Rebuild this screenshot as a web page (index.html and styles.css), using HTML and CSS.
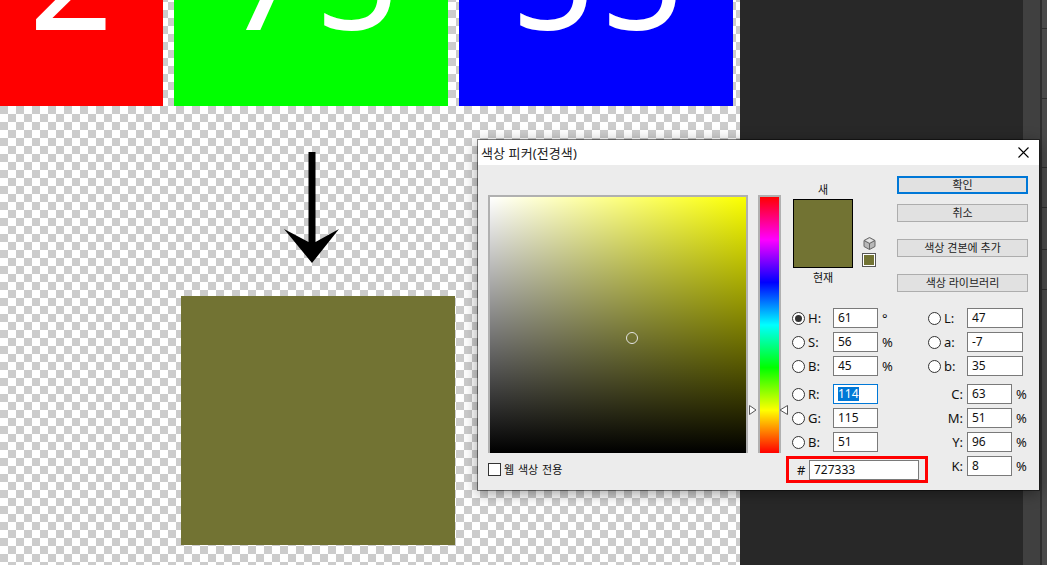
FILE: index.html
```html
<!DOCTYPE html>
<html lang="ko">
<head>
    <meta charset="UTF-8">
    <title>색상 피커</title>
    <link rel="stylesheet" href="styles.css">
</head>
<body>
    <div class="canvas">
        <div class="swatch-row">
            <div class="swatch red"><span class="digits">2</span></div>
            <div class="swatch green"><span class="digits">75</span></div>
            <div class="swatch blue"><span class="digits">55</span></div>
        </div>
        <svg class="arrow" width="56" height="111" viewBox="0 0 56 111">
            <polygon points="24.5,0 31.5,0 31.5,90 55,77 28,111 0,77 24.5,90" fill="#000"/>
        </svg>
        <div class="result"></div>
    </div>
    <div class="workspace"></div>
    <div class="dock"></div>
    <div class="rail">
        <div class="rail-panel p1"></div>
        <div class="rail-panel p2"></div>
        <div class="rail-panel p3"></div>
        <div class="rail-panel p4"></div>
        <div class="rail-panel p5"></div>
        <div class="rail-panel p6"></div>
    </div>

    <div class="dialog">
        <div class="title-bar">
            <span>색상 피커(전경색)</span>
            <svg width="11" height="11" viewBox="0 0 11 11">
                <path d="M0.5 0.5L10.5 10.5M10.5 0.5L0.5 10.5" stroke="#000" stroke-width="1.1" fill="none"/>
            </svg>
        </div>
        <div class="dialog-body">
            <div class="pickers">
                <div class="picker-top">
                    <div class="color-field"><div class="marker"></div></div>
                    <div class="hue-slider">
                        <svg class="hue-arrow left" width="8" height="10" viewBox="0 0 8 10">
                            <path d="M0.5 0.5L7 5L0.5 9.5Z" fill="#fff" stroke="#555"/>
                        </svg>
                        <svg class="hue-arrow right" width="9" height="10" viewBox="0 0 9 10">
                            <path d="M8.5 0.5L1 5L8.5 9.5Z" fill="#fff" stroke="#555"/>
                        </svg>
                    </div>
                </div>
                <div class="web-only">
                    <span class="checkbox"></span>
                    <span>웹 색상 전용</span>
                </div>
            </div>

            <div class="panel">
                <div class="panel-top">
                    <div class="preview">
                        <div class="preview-label">새</div>
                        <div class="preview-row">
                            <div class="preview-swatch"></div>
                            <div class="gamut">
                                <svg width="13" height="13" viewBox="0 0 13 13">
                                    <path d="M6.5 0.5L12 3.5V9.5L6.5 12.5L1 9.5V3.5Z" fill="#b8b8b8" stroke="#666"/>
                                    <path d="M1 3.5L6.5 6.5L12 3.5M6.5 6.5V12.5" fill="none" stroke="#666"/>
                                    <path d="M6.5 1.5L10.5 3.6L6.5 5.6L2.5 3.6Z" fill="#e4e4e4"/>
                                </svg>
                                <div class="web-swatch"></div>
                            </div>
                        </div>
                        <div class="preview-label current">현재</div>
                    </div>
                    <div class="buttons">
                        <div class="button-pair">
                            <div class="btn primary">확인</div>
                            <div class="btn">취소</div>
                        </div>
                        <div class="btn">색상 견본에 추가</div>
                        <div class="btn">색상 라이브러리</div>
                    </div>
                </div>

                <div class="values">
                    <div class="value-col left-col">
                        <div class="value-group">
                            <div class="row"><span class="radio on"></span><span class="name">H:</span><span class="field">61</span><span class="unit">°</span></div>
                            <div class="row"><span class="radio"></span><span class="name">S:</span><span class="field">56</span><span class="unit">%</span></div>
                            <div class="row"><span class="radio"></span><span class="name">B:</span><span class="field">45</span><span class="unit">%</span></div>
                        </div>
                        <div class="value-group">
                            <div class="row"><span class="radio"></span><span class="name">R:</span><span class="field focus"><span class="selected">114</span></span></div>
                            <div class="row"><span class="radio"></span><span class="name">G:</span><span class="field">115</span></div>
                            <div class="row"><span class="radio"></span><span class="name">B:</span><span class="field">51</span></div>
                        </div>
                        <div class="hex-box">
                            <span class="hash">#</span><span class="field hex">727333</span>
                        </div>
                    </div>
                    <div class="value-col right-col">
                        <div class="value-group">
                            <div class="row"><span class="radio"></span><span class="name">L:</span><span class="field wide">47</span></div>
                            <div class="row"><span class="radio"></span><span class="name">a:</span><span class="field wide">-7</span></div>
                            <div class="row"><span class="radio"></span><span class="name">b:</span><span class="field wide">35</span></div>
                        </div>
                        <div class="value-group">
                            <div class="row"><span class="name cmyk">C:</span><span class="field">63</span><span class="unit">%</span></div>
                            <div class="row"><span class="name cmyk">M:</span><span class="field">51</span><span class="unit">%</span></div>
                            <div class="row"><span class="name cmyk">Y:</span><span class="field">96</span><span class="unit">%</span></div>
                            <div class="row"><span class="name cmyk">K:</span><span class="field">8</span><span class="unit">%</span></div>
                        </div>
                    </div>
                </div>
            </div>
        </div>
    </div>
</body>
</html>
```
FILE: styles.css
```css
* {
    box-sizing: border-box;
}

html, body {
    margin: 0;
    height: 565px;
    overflow: hidden;
}

body {
    display: flex;
    position: relative;
    background: #282828;
    font-family: "Noto Sans", "Noto Sans CJK KR", sans-serif;
    font-size: 13px;
    color: #111;
}

/* document area */
.canvas {
    width: 740px;
    height: 565px;
    overflow: hidden;
    background: repeating-conic-gradient(#ccc 0 25%, #fff 0 50%) 0 2px / 16px 16px;
}

.swatch-row {
    display: flex;
    gap: 11px;
    height: 106px;
}

.swatch {
    width: 274px;
    overflow: hidden;
    padding-left: 8px;
    text-align: center;
    color: #fff;
}

.swatch.red {
    width: 163px;
    padding-left: 29px;
    text-align: left;
    background: #f00;
}

.swatch.green {
    background: #0f0;
}

.swatch.blue {
    background: #00f;
}

.digits {
    display: block;
    margin-top: -100px;
    font-size: 147px;
    letter-spacing: 5px;
    line-height: 1;
}

.arrow {
    display: block;
    margin: 46px 0 0 284px;
}

.result {
    width: 274px;
    height: 249px;
    margin: 33px 0 0 181px;
    background: #727333;
}

/* right side of the app */
.workspace {
    flex: 1;
}

.dock {
    width: 17px;
    background: #404040;
}

.rail {
    width: 7px;
    border-left: 2px solid #2e2e2e;
    background: #4a4a4a;
}

.rail-panel {
    border-bottom: 1px solid #2e2e2e;
}

.p1 { height: 29px; }
.p2 { height: 70px; }
.p3 { height: 69px; }
.p4 { height: 40px; }
.p5 { height: 42px; }
.p6 { height: 40px; }

/* color picker window */
.dialog {
    position: absolute;
    left: 478px;
    top: 140px;
    width: 561px;
    height: 350px;
    background: #ececec;
    box-shadow: 0 0 0 1px rgba(0, 0, 0, 0.45), 0 3px 14px rgba(0, 0, 0, 0.4);
}

.title-bar {
    display: flex;
    justify-content: space-between;
    align-items: center;
    height: 25px;
    padding: 0 10px 0 3px;
    background: #fff;
    letter-spacing: 0.1px;
    color: #222;
}

.dialog-body {
    display: flex;
    padding: 11px 11px 0 10px;
}

.pickers {
    margin-top: 19px;
}

.picker-top {
    display: flex;
}

.color-field {
    position: relative;
    width: 260px;
    height: 258px;
    border: 2px solid #b0b0b0;
    border-bottom: 0;
    background:
        linear-gradient(to top, #000, rgba(0, 0, 0, 0)),
        linear-gradient(to right, #fff, #fbff00);
}

.marker {
    position: absolute;
    left: 136px;
    top: 135px;
    width: 12px;
    height: 12px;
    border: 1px solid #e4e4e4;
    border-radius: 50%;
}

.hue-slider {
    position: relative;
    width: 23px;
    height: 258px;
    margin-left: 10px;
    border: 2px solid #b0b0b0;
    border-bottom: 0;
    background: linear-gradient(to bottom, #f00, #f0f 16.67%, #00f 33.33%, #0ff 50%, #0f0 66.67%, #ff0 83.33%, #f00);
}

.hue-arrow {
    position: absolute;
    top: 208px;
}

.hue-arrow.left {
    left: -11px;
}

.hue-arrow.right {
    left: 19px;
}

.web-only {
    display: flex;
    align-items: center;
    gap: 3px;
    margin-top: 10px;
    font-size: 11px;
    line-height: 13px;
    word-spacing: 1px;
}

.checkbox {
    width: 13px;
    height: 13px;
    border: 1px solid #333;
    background: #fff;
}

.panel {
    width: 242px;
    margin-left: 5px;
}

.panel-top {
    display: flex;
    justify-content: space-between;
    height: 116px;
}

.preview {
    width: 90px;
    padding-left: 7px;
}

.preview-label {
    width: 60px;
    height: 23px;
    padding-top: 6px;
    text-align: center;
    font-size: 11px;
    line-height: 16px;
}

.preview-label.current {
    padding-top: 2px;
}

.preview-row {
    display: flex;
    align-items: flex-end;
    gap: 9px;
}

.preview-swatch {
    width: 60px;
    height: 69px;
    border: 1px solid #000;
    background: #727333;
}

.gamut {
    display: flex;
    flex-direction: column;
    align-items: center;
    gap: 3px;
    margin-bottom: 1px;
}

.gamut svg {
    display: block;
}

.web-swatch {
    width: 14px;
    height: 14px;
    border: 1px solid #555;
    outline: 1px solid #fff;
    outline-offset: -2px;
    background: #727333;
}

.buttons {
    display: flex;
    flex-direction: column;
    gap: 17px;
    width: 131px;
}

.button-pair {
    display: flex;
    flex-direction: column;
    gap: 10px;
}

.btn {
    height: 18px;
    border: 1px solid #adadad;
    background: #e1e1e1;
    text-align: center;
    font-size: 11px;
    line-height: 16px;
    color: #222;
}

.btn.primary {
    border: 2px solid #0078d7;
    line-height: 14px;
}

.values {
    display: flex;
    margin-top: 16px;
}

.value-col {
    display: flex;
    flex-direction: column;
    gap: 8px;
}

.left-col {
    width: 142px;
}

.left-col .value-group {
    padding-left: 6px;
}

.value-group {
    display: flex;
    flex-direction: column;
    gap: 4px;
}

.row {
    display: flex;
    align-items: center;
    height: 20px;
}

.radio {
    display: flex;
    align-items: center;
    justify-content: center;
    width: 13px;
    height: 13px;
    border: 1px solid #333;
    border-radius: 50%;
    background: #fff;
}

.radio.on::after {
    content: "";
    width: 7px;
    height: 7px;
    border-radius: 50%;
    background: #333;
}

.name {
    width: 28px;
    padding-left: 3px;
}

.right-col .name {
    width: 26px;
}

.right-col .name.cmyk {
    width: 39px;
    padding: 0 4px 0 0;
    text-align: right;
}

.field {
    width: 45px;
    height: 20px;
    padding-left: 4px;
    border: 1px solid #7a7a7a;
    background: #fff;
    font-size: 12px;
    line-height: 18px;
}

.field.wide {
    width: 56px;
}

.field.focus {
    border-color: #0078d7;
}

.selected {
    display: inline-block;
    background: #0078d7;
    color: #fff;
    line-height: 14px;
}

.unit {
    margin-left: 4px;
}

.hex-box {
    display: flex;
    width: 142px;
    height: 27px;
    margin-top: -4px;
    padding-top: 1px;
    padding-left: 8px;
    border: 3px solid #f00;
}

.hash {
    width: 12px;
    line-height: 20px;
}

.field.hex {
    width: 110px;
}
```
